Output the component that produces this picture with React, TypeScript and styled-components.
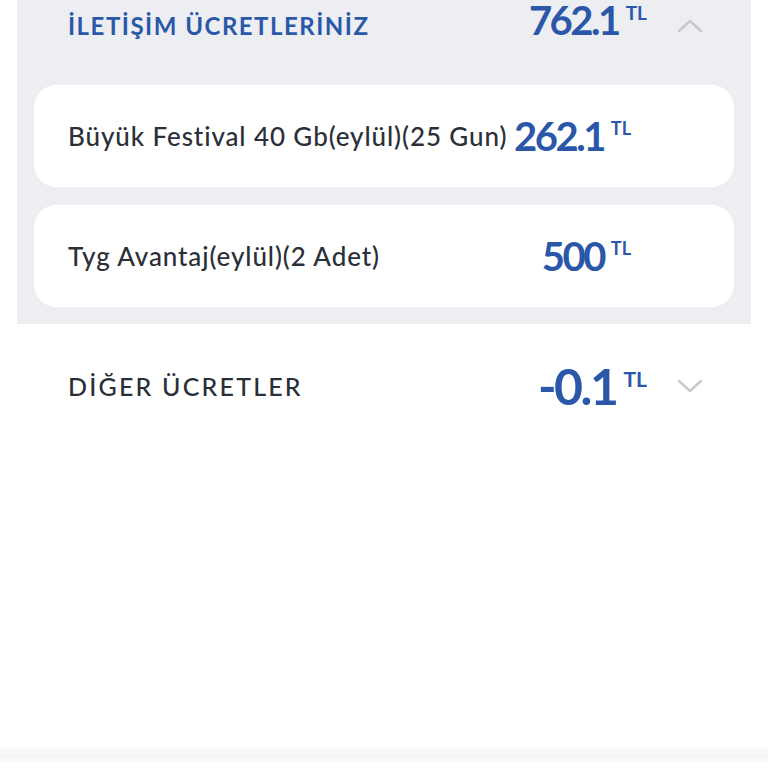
import React from "react";
import styled, { createGlobalStyle } from "styled-components";

const GlobalStyle = createGlobalStyle`
  html, body {
    margin: 0;
    padding: 0;
    background: #fff;
    font-family: "Lato", "Noto Sans", sans-serif;
  }
`;

const Page = styled.div`
  width: 768px;
  height: 768px;
  display: flex;
  flex-direction: column;
  background: #fff;
  overflow: hidden;
`;

const Content = styled.div`
  flex: 1;
  padding: 0 17px;
`;

const Panel = styled.div<{ $open?: boolean }>`
  display: flex;
  flex-direction: column;
  background: ${(p) => (p.$open ? "#eceef1" : "#fff")};
  padding-bottom: ${(p) => (p.$open ? "17px" : "0")};
`;

const SectionHeader = styled.div<{ $height: number; $align: string }>`
  display: flex;
  align-items: ${(p) => p.$align};
  height: ${(p) => p.$height}px;
  padding: 0 48px 0 51px;
`;

const SectionTitle = styled.p<{ $active?: boolean }>`
  flex: 1;
  margin: 0;
  font-size: ${(p) => (p.$active ? 24 : 25)}px;
  font-weight: ${(p) => (p.$active ? 700 : 500)};
  letter-spacing: ${(p) => (p.$active ? 1.5 : 2.2)}px;
  color: ${(p) => (p.$active ? "#2a58a8" : "#2a2e37")};
  white-space: nowrap;
`;

const Amount = styled.div`
  display: flex;
  align-items: flex-start;
  color: #2a57a8;
  font-weight: 700;
  line-height: 1;
`;

const Value = styled.span<{ $size: number }>`
  font-size: ${(p) => p.$size}px;
  letter-spacing: -2.5px;
`;

const Currency = styled.span<{ $size: number; $top: number }>`
  font-size: ${(p) => p.$size}px;
  margin-left: 7px;
  margin-top: ${(p) => p.$top}px;
`;

const Chevron = styled.svg<{ $top?: number }>`
  width: 26px;
  height: 14px;
  margin-left: 30px;
  flex-shrink: 0;
  ${(p) => (p.$top !== undefined ? `align-self: flex-start; margin-top: ${p.$top}px;` : "")}
`;

const Cards = styled.div`
  display: flex;
  flex-direction: column;
  gap: 18px;
  padding: 0 17px;
`;

const Card = styled.div`
  display: flex;
  align-items: center;
  height: 102px;
  padding: 0 103px 0 34px;
  background: #fff;
  border-radius: 22px;
`;

const ItemName = styled.p`
  flex: 1;
  margin: 0;
  font-size: 26px;
  font-weight: 500;
  letter-spacing: 0.9px;
  color: #2b2f38;
  white-space: nowrap;
`;

const BottomBar = styled.div`
  height: 15px;
  margin-bottom: 6px;
  background: linear-gradient(#fdfdfd, #f4f4f4 55%, #fafafa);
`;

type Item = { name: string; value: string };

const items: Item[] = [
  { name: "Büyük Festival 40 Gb(eylül)(25 Gun)", value: "262.1" },
  { name: "Tyg Avantaj(eylül)(2 Adet)", value: "500" },
];

type PriceProps = { value: string; size: number; tlSize: number; tlTop: number };

const Price: React.FC<PriceProps> = ({ value, size, tlSize, tlTop }) => (
  <Amount>
    <Value $size={size}>{value}</Value>
    <Currency $size={tlSize} $top={tlTop}>
      TL
    </Currency>
  </Amount>
);

const Arrow: React.FC<{ up?: boolean; top?: number }> = ({ up, top }) => (
  <Chevron viewBox="0 0 26 14" $top={top}>
    <path
      d={up ? "M2 12 L13 2 L24 12" : "M2 2 L13 12 L24 2"}
      fill="none"
      stroke="#c8c9cb"
      strokeWidth="2.4"
      strokeLinecap="round"
      strokeLinejoin="round"
    />
  </Chevron>
);

const App: React.FC = () => {
  return (
    <Page>
      <GlobalStyle />
      <Content>
        <Panel $open>
          <SectionHeader $height={85} $align="baseline">
            <SectionTitle $active>İLETİŞİM ÜCRETLERİNİZ</SectionTitle>
            <Price value="762.1" size={40} tlSize={19} tlTop={3} />
            <Arrow up top={19} />
          </SectionHeader>
          <Cards>
            {items.map((item) => (
              <Card key={item.name}>
                <ItemName>{item.name}</ItemName>
                <Price value={item.value} size={40} tlSize={18} tlTop={3} />
              </Card>
            ))}
          </Cards>
        </Panel>
        <Panel>
          <SectionHeader $height={124} $align="center">
            <SectionTitle>DİĞER ÜCRETLER</SectionTitle>
            <Price value="-0.1" size={50} tlSize={21} tlTop={7} />
            <Arrow />
          </SectionHeader>
        </Panel>
      </Content>
      <BottomBar />
    </Page>
  );
};

export default App;
